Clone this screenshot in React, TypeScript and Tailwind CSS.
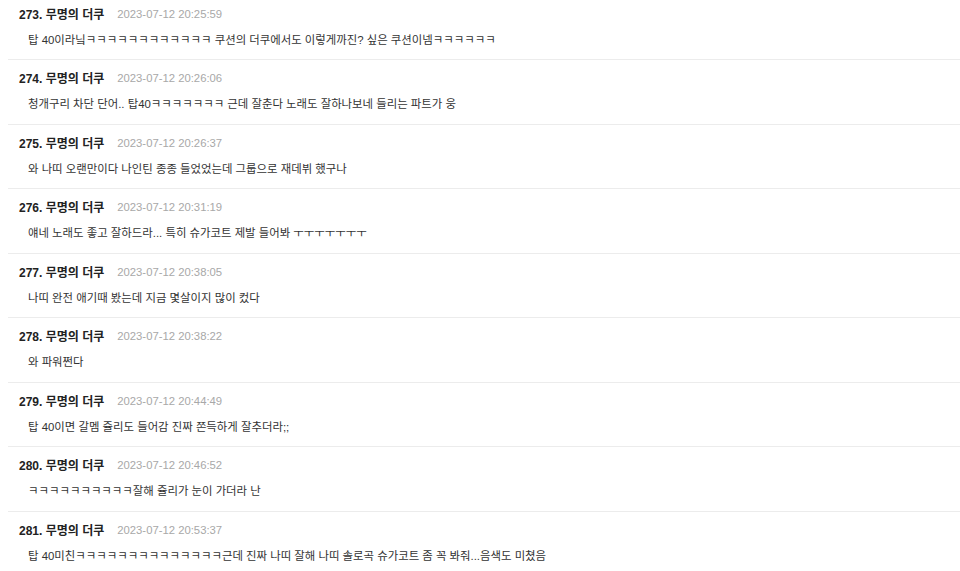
const comments = [
  { no: 273, time: '2023-07-12 20:25:59', text: '탑 40이라닠ㅋㅋㅋㅋㅋㅋㅋㅋㅋㅋㅋㅋ 쿠션의 더쿠에서도 이렇게까진? 싶은 쿠션이넴ㅋㅋㅋㅋㅋㅋ' },
  { no: 274, time: '2023-07-12 20:26:06', text: '청개구리 차단 단어.. 탑40ㅋㅋㅋㅋㅋㅋㅋ 근데 잘춘다 노래도 잘하나보네 들리는 파트가 웅' },
  { no: 275, time: '2023-07-12 20:26:37', text: '와 나띠 오랜만이다 나인틴 종종 들었었는데 그룹으로 재데뷔 했구나' },
  { no: 276, time: '2023-07-12 20:31:19', text: '얘네 노래도 좋고 잘하드라... 특히 슈가코트 제발 들어봐 ㅜㅜㅜㅜㅜㅜㅜ' },
  { no: 277, time: '2023-07-12 20:38:05', text: '나띠 완전 애기때 봤는데 지금 몇살이지 많이 컸다' },
  { no: 278, time: '2023-07-12 20:38:22', text: '와 파워쩐다' },
  { no: 279, time: '2023-07-12 20:44:49', text: '탑 40이면 갈멤 쥴리도 들어감 진짜 쫀득하게 잘추더라;;' },
  { no: 280, time: '2023-07-12 20:46:52', text: 'ㅋㅋㅋㅋㅋㅋㅋㅋㅋㅋ잘해 쥴리가 눈이 가더라 난' },
  { no: 281, time: '2023-07-12 20:53:37', text: '탑 40미친ㅋㅋㅋㅋㅋㅋㅋㅋㅋㅋㅋㅋㅋㅋ근데 진짜 나띠 잘해 나띠 솔로곡 슈가코트 좀 꼭 봐줘...음색도 미쳤음' },
];

export default function App() {
  return (
    <div className="w-[960px] h-[571px] overflow-hidden bg-white font-['Liberation_Sans','Noto_Sans_CJK_KR',sans-serif]">
      <div className="-mt-[4.5px]">
        {comments.map((c, i) => (
          <div
            key={c.no}
            className={
              i === comments.length - 1
                ? 'h-[64.5px] ml-2 flex flex-col'
                : 'h-[64.5px] ml-2 flex flex-col border-b border-[#ececec]'
            }
          >
            {/* header */}
            <div className="h-[36px] pl-[11px] pt-[2px] flex items-center gap-[13px]">
              <span className="text-[12px] font-bold text-[#222] leading-none">
                {c.no}. 무명의 더쿠
              </span>
              <span className="text-[11.3px] text-[#a8a8a8] leading-none">{c.time}</span>
            </div>
            {/* body */}
            <div className="pl-5 pt-[3px] text-[11.4px] text-[#333] leading-none">{c.text}</div>
          </div>
        ))}
      </div>
    </div>
  );
}
